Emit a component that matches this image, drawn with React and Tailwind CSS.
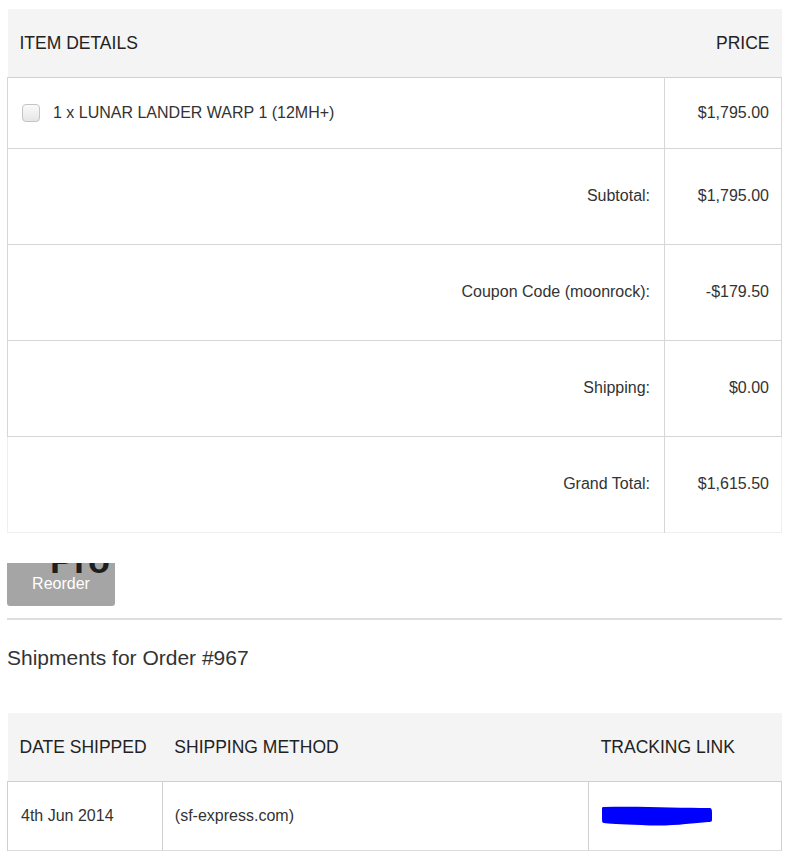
import React from 'react';

const font = { fontFamily: '"Liberation Sans", Arial, sans-serif' };

function Row({ label, value }) {
    return (
        <tr className="border-t border-[#d6d6d6]">
            <td className="h-[96px] pr-[14px] text-right align-middle border-l border-[#d6d6d6]">{label}</td>
            <td className="pr-[12px] text-right align-middle border-l border-r border-[#d6d6d6]">{value}</td>
        </tr>
    );
}

export default function App() {
    return (
        <div className="bg-white min-h-screen px-[7px] pt-[9px] text-[16px] text-[#333]" style={font}>
            {/* Order items */}
            <table className="w-[775px] border-collapse">
                <colgroup>
                    <col className="w-[658px]" />
                    <col className="w-[117px]" />
                </colgroup>
                <thead>
                    <tr className="bg-[#f4f4f4] text-[#222] text-[17.5px]">
                        <th className="h-[68px] pl-[12px] text-left font-normal">ITEM DETAILS</th>
                        <th className="pr-[12px] text-right font-normal">PRICE</th>
                    </tr>
                </thead>
                <tbody>
                    <tr className="border-t border-[#d0d0d0]">
                        <td className="h-[71px] pl-[14px] border-l border-[#d6d6d6]">
                            <div className="flex items-center gap-[13px]">
                                <span className="w-[18px] h-[18px] rounded-[4px] border border-[#c4c4c4] bg-gradient-to-b from-[#fafafa] to-[#e6e6e6]" />
                                <span>1 x LUNAR LANDER WARP 1 (12MH+)</span>
                            </div>
                        </td>
                        <td className="pr-[12px] text-right border-l border-r border-[#d6d6d6]">$1,795.00</td>
                    </tr>
                    <Row label="Subtotal:" value="$1,795.00" />
                    <Row label="Coupon Code (moonrock):" value="-$179.50" />
                    <Row label="Shipping:" value="$0.00" />
                    <tr className="border-t border-b border-t-[#d6d6d6] border-b-[#efefef]">
                        <td className="h-[96px] pr-[14px] text-right border-l border-[#efefef]">Grand Total:</td>
                        <td className="pr-[12px] text-right border-l border-r border-l-[#d6d6d6] border-r-[#efefef]">$1,615.50</td>
                    </tr>
                </tbody>
            </table>

            {/* Reorder */}
            <div className="mt-[30px]">
                <button className="relative block overflow-hidden w-[108px] h-[43px] bg-[#a5a5a5] rounded-b-[3px] text-white text-[16px]" style={font}>
                    <span className="absolute left-[43px] top-[-20px] text-[36px] leading-none font-bold text-[#1e1e1e]">Pro</span>
                    <span className="relative">Reorder</span>
                </button>
            </div>

            <hr className="mt-[12px] w-[775px] border-t-2 border-[#dedede]" />

            <h2 className="mt-[27px] text-[21px] text-[#333] font-normal leading-none">Shipments for Order #967</h2>

            {/* Shipments */}
            <table className="mt-[45px] w-[775px] border-collapse">
                <colgroup>
                    <col className="w-[155px]" />
                    <col className="w-[427px]" />
                    <col className="w-[193px]" />
                </colgroup>
                <thead>
                    <tr className="bg-[#f4f4f4] text-[#222] text-[17.5px]">
                        <th className="h-[69px] pl-[12px] text-left font-normal">DATE SHIPPED</th>
                        <th className="pl-[12px] text-left font-normal">SHIPPING METHOD</th>
                        <th className="pl-[12px] text-left font-normal">TRACKING LINK</th>
                    </tr>
                </thead>
                <tbody>
                    <tr className="border-t border-b border-t-[#cfcfcf] border-b-[#dcdcdc]">
                        <td className="h-[69px] pl-[13px] border-l border-[#d0d0d0]">4th Jun 2014</td>
                        <td className="pl-[12px] border-l border-[#d0d0d0]">(sf-express.com)</td>
                        <td className="pl-[12px] border-l border-r border-[#d0d0d0]">
                            <svg width="112" height="22" viewBox="0 0 112 22" className="block">
                                <path d="M2 2 C40 1 80 3 108 3 C111 3 111 5 111 8 L111 15 C111 17 109 17 107 17 C90 18 70 22 40 20 C20 19 6 19 3 18 C1 18 1 16 1 14 L1 5 C1 3 1 2 2 2 Z" fill="#0000ff" />
                            </svg>
                        </td>
                    </tr>
                </tbody>
            </table>
        </div>
    );
}
